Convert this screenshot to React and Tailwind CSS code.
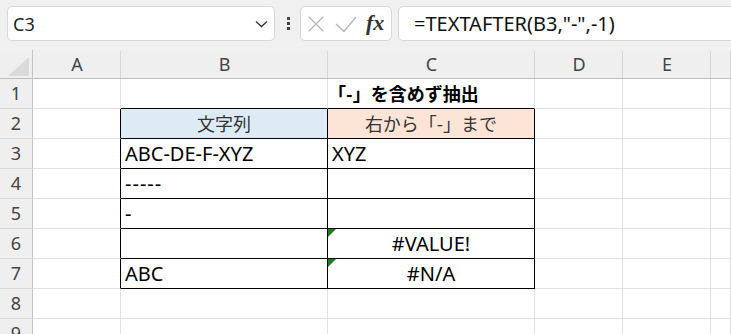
import React from "react";

const LATIN = { fontFamily: '"Noto Sans", "Noto Sans CJK JP", sans-serif' };

const COLS = ["A", "B", "C", "D", "E", ""];

function Tri() {
  return (
    <svg className="absolute left-0 top-0" width="8" height="8" viewBox="0 0 8 8">
      <polygon points="0,0 8,0 0,8" fill="#17811a" />
    </svg>
  );
}

function Cell({ children, rb, bb, bg = "", align = "justify-start pl-[4px]", extra = "" }) {
  return (
    <div
      className={
        "relative h-[30px] border-r border-b flex items-center whitespace-nowrap text-black " +
        (rb ? "border-r-black " : "border-r-[#e1e1e1] ") +
        (bb ? "border-b-black " : "border-b-[#e1e1e1] ") +
        bg +
        " " +
        align +
        " " +
        extra
      }
    >
      {children}
    </div>
  );
}

function RowHead({ n }) {
  return (
    <div className="h-[30px] bg-[#efefef] border-r border-r-[#c6c6c6] border-b border-b-[#dadada] flex items-center justify-center text-[18px] text-[#444]">
      {n}
    </div>
  );
}

export default function App() {
  const rows = [];
  for (let r = 1; r <= 9; r++) {
    rows.push(<RowHead key={"h" + r} n={r} />);
    const inTable = r >= 2 && r <= 7;
    // A
    rows.push(<Cell key={"a" + r} rb={inTable} bb={false} />);
    // B
    let bContent = null;
    let bBg = "";
    let bAlign = "justify-start pl-[4px]";
    if (r === 2) {
      bContent = <span className="text-[18px] text-[#333]" style={{ fontFamily: '"Noto Sans CJK JP", sans-serif' }}>文字列</span>;
      bBg = "bg-[#ddebf7]";
      bAlign = "justify-center";
    } else if (r === 3) bContent = <span className="text-[20px]">ABC-DE-F-XYZ</span>;
    else if (r === 4) bContent = <span className="text-[20px] tracking-[1px]">-----</span>;
    else if (r === 5) bContent = <span className="text-[20px]">-</span>;
    else if (r === 7) bContent = <span className="text-[20px]">ABC</span>;
    rows.push(
      <Cell key={"b" + r} rb={inTable} bb={r >= 1 && r <= 7} bg={bBg} align={bAlign}>
        {bContent}
      </Cell>
    );
    // C
    let cContent = null;
    let cBg = "";
    let cAlign = "justify-start pl-[4px]";
    let tri = false;
    if (r === 1) {
      cContent = (
        <span className="text-[18px] font-bold" style={{ fontFamily: '"Noto Sans CJK JP", sans-serif' }}>
          「-」を含めず抽出
        </span>
      );
      cAlign = "justify-start pl-0";
    } else if (r === 2) {
      cContent = <span className="text-[18px] text-[#333]" style={{ fontFamily: '"Noto Sans CJK JP", sans-serif' }}>右から「-」まで</span>;
      cBg = "bg-[#fce4d6]";
      cAlign = "justify-center";
    } else if (r === 3) cContent = <span className="text-[20px]">XYZ</span>;
    else if (r === 6) {
      cContent = <span className="text-[20px]">#VALUE!</span>;
      cAlign = "justify-center";
      tri = true;
    } else if (r === 7) {
      cContent = <span className="text-[20px]">#N/A</span>;
      cAlign = "justify-center";
      tri = true;
    }
    rows.push(
      <Cell key={"c" + r} rb={inTable} bb={r >= 1 && r <= 7} bg={cBg} align={cAlign}>
        {tri && <Tri />}
        {cContent}
      </Cell>
    );
    rows.push(<Cell key={"d" + r} />);
    rows.push(<Cell key={"e" + r} />);
    rows.push(<Cell key={"f" + r} />);
  }

  return (
    <div className="w-[731px] h-[334px] overflow-hidden bg-white" style={LATIN}>
      {/* formula bar */}
      <div className="h-[50px] bg-[#f0f0f0] flex items-start pt-[6px] pl-[7px]">
        <div className="w-[268px] h-[35px] bg-white border border-[#d8d8d8] rounded-[5px] flex items-center pl-[5px] pr-[5px]">
          <span className="text-[18px] text-[#222] flex-1 pt-[2px]">C3</span>
          <svg width="13" height="8" viewBox="0 0 13 8" className="mr-[1px]">
            <polyline points="1,1.5 6.5,6.5 12,1.5" fill="none" stroke="#333" strokeWidth="1.3" />
          </svg>
        </div>
        <div className="w-[25px] h-[35px] flex flex-col items-center justify-center gap-[2px] pl-[1px]">
          <div className="w-[3px] h-[3px] bg-[#444]" />
          <div className="w-[3px] h-[3px] bg-[#444]" />
          <div className="w-[3px] h-[3px] bg-[#444]" />
        </div>
        <div className="w-[92px] h-[35px] bg-white border border-[#d8d8d8] rounded-[5px] flex items-center pl-[6px]">
          <svg width="18" height="18" viewBox="0 0 18 18">
            <line x1="1.5" y1="1.5" x2="16.5" y2="16.5" stroke="#b4b4b4" strokeWidth="1.3" />
            <line x1="16.5" y1="1.5" x2="1.5" y2="16.5" stroke="#b4b4b4" strokeWidth="1.3" />
          </svg>
          <svg width="22" height="18" viewBox="0 0 22 18" className="ml-[10px]">
            <polyline points="1,9 9,16.5 21,2" fill="none" stroke="#b4b4b4" strokeWidth="1.3" />
          </svg>
          <span
            className="ml-[9px] text-[22px] italic font-bold text-[#333] leading-none pb-[2px]"
            style={{ fontFamily: '"Liberation Serif", "DejaVu Serif", serif' }}
          >
            fx
          </span>
        </div>
        <div className="flex-1 mr-[-10px] ml-[6px] h-[35px] bg-white border border-[#d8d8d8] rounded-[5px] flex items-center pl-[15px]">
          <span className="text-[20px] text-[#111]">=TEXTAFTER(B3,"-",-1)</span>
        </div>
      </div>

      {/* sheet */}
      <div className="grid grid-cols-[33px_88px_207px_207px_88px_88px_1fr]">
        <div className="h-[29px] bg-[#efefef] border-r border-r-[#c6c6c6] border-b border-b-[#bdbdbd] relative">
          <svg className="absolute left-[8px] top-[7px]" width="22" height="19" viewBox="0 0 22 19">
            <polygon points="21,0 21,19 0,19" fill="#dadada" />
          </svg>
        </div>
        {COLS.map((c, i) => (
          <div
            key={"col" + i}
            className="h-[29px] bg-[#efefef] border-b border-b-[#bdbdbd] flex items-center justify-center text-[18px] text-[#444] relative"
          >
            <div className="absolute right-0 top-[1px] bottom-0 w-px bg-[#d6d6d6]" />
            {c}
          </div>
        ))}
        {rows}
      </div>
    </div>
  );
}
